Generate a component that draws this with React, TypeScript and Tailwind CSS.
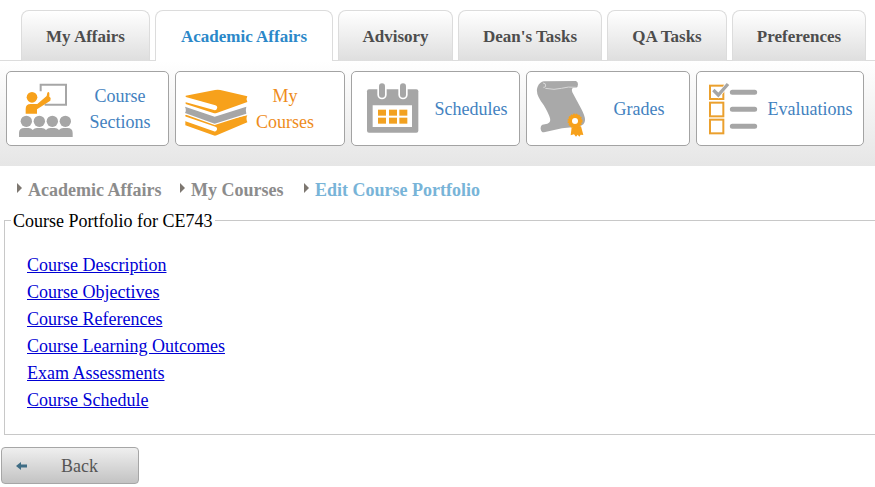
import type { ReactNode } from "react";

const tabs = [
  { label: "My Affairs", width: "w-[129px]" },
  { label: "Academic Affairs", width: "w-[178px]", active: true },
  { label: "Advisory", width: "w-[115px]" },
  { label: "Dean's Tasks", width: "w-36" },
  { label: "QA Tasks", width: "w-[120px]" },
  { label: "Preferences", width: "w-[134px]" },
];

const crumbs = ["Academic Affairs", "My Courses", "Edit Course Portfolio"];

const portfolioLinks = [
  "Course Description",
  "Course Objectives",
  "Course References",
  "Course Learning Outcomes",
  "Exam Assessments",
  "Course Schedule",
];

function SectionsIcon() {
  return (
    <svg viewBox="55 61 168 168" className="h-14 w-14 shrink-0" aria-hidden="true">
      <path d="M123 92V72h76v60h-64" fill="none" stroke="#a6a6a6" strokeWidth="6" />
      <circle cx="97" cy="110" r="16" fill="#f7a11b" />
      <path
        d="M78 159v-14q0-15 15-15h20l28-24 2-10q4-5 6 1v11l4 4-1 8-40 26v13z"
        fill="#f7a11b"
      />
      <g fill="#a6a6a6">
        {[80, 119, 158, 197].map((x) => (
          <circle key={x} cx={x} cy="182" r="17" />
        ))}
        <path d="M58 230v-13q0-15 16-15h13q8 0 12 6 5-6 13-6h14q8 0 13 6 5-6 13-6h13q8 0 13 6 5-6 13-6h12q16 0 16 15v13z" />
      </g>
    </svg>
  );
}

function BooksIcon() {
  return (
    <svg viewBox="42 61 192 168" className="h-14 w-16 shrink-0" aria-hidden="true">
      {/* bottom book */}
      <path d="M46 163l20-6 68 29 98-22q-5 9 0 21l-92 39q-5 2-10 0l-84-30z" fill="#f7a11b" />
      <path d="M30 169l104 36" stroke="#fff" strokeWidth="14" strokeLinecap="round" />
      {/* middle book */}
      <path
        d="M45 138l89 30 95-30q-3 9 0 21l-95 30-89-32q5-8 0-19z"
        fill="#a6a6a6"
        stroke="#fff"
        strokeWidth="7"
        paintOrder="stroke"
      />
      {/* top book */}
      <path
        d="M47 105l88-17q8-2 16 0l81 19q-5 8 0 17l-92 33q-5 2-10 0l-83-27z"
        fill="#f7a11b"
        stroke="#fff"
        strokeWidth="4"
        paintOrder="stroke"
      />
      <path d="M30 112l104 29" stroke="#fff" strokeWidth="15" strokeLinecap="round" />
    </svg>
  );
}

function CalendarIcon() {
  return (
    <svg viewBox="63 61 162 168" className="h-14 w-[54px] shrink-0" aria-hidden="true">
      <rect x="66" y="86" width="154" height="130" rx="6" fill="#a6a6a6" />
      <path d="M83 134h118v65H83z" fill="#fff" />
      {[111, 174].map((x) => (
        <g key={x}>
          <rect x={x - 14} y="66" width="28" height="50" rx="14" fill="#fff" />
          <rect x={x - 9} y="68" width="18" height="43" rx="9" fill="#a6a6a6" />
        </g>
      ))}
      <g fill="#f2a120">
        {[99, 132, 163].map((x) => (
          <g key={x}>
            <rect x={x} y="147" width="24" height="18" />
            <rect x={x} y="171" width="24" height="18" />
          </g>
        ))}
      </g>
    </svg>
  );
}

function DiplomaIcon() {
  return (
    <svg viewBox="48 61 150 168" className="h-14 w-[50px] shrink-0" aria-hidden="true">
      <path
        d="M66 63q4-2 8-1l94-1q6 2 6 10 0 9-6 10h-8q-7 2-3 14l27 50q16 30 9 41-4 9-22 12l-45 5-54 12q-8 1-10-10-1-10 5-13l15-3q11-3 8-16-4-15-19-40Q48 104 51 85q3-16 15-22z"
        fill="#a9a9a9"
      />
      <path
        d="M69 67q9 0 8 9-1 5-7 4M76 83q28 6 48 0t44-3"
        fill="none"
        stroke="#d8d8d8"
        strokeWidth="3"
      />
      <path d="M155 200l-3 24 10-3 6 7 5-6 5 6 4-6 8 1-7-26z" fill="#f7a11b" />
      <circle cx="165" cy="181" r="20" fill="#f7a11b" stroke="#f7a11b" strokeWidth="5" strokeDasharray="5 3" />
      <circle cx="165" cy="181" r="9" fill="#fff" />
    </svg>
  );
}

function ChecklistIcon() {
  return (
    <svg viewBox="54 61 153 168" className="h-14 w-[51px] shrink-0" aria-hidden="true">
      <g fill="none" stroke="#eba02d" strokeWidth="6">
        <rect x="60" y="75" width="40" height="40" />
        <rect x="60" y="126" width="40" height="41" />
        <rect x="60" y="177" width="40" height="41" />
      </g>
      <path d="M70 88l15 15 29-33" fill="none" stroke="#fff" strokeWidth="14" />
      <g fill="none" stroke="#a6a6a6">
        <path d="M70 88l15 15 29-33" strokeWidth="10" />
        <path d="M127 95h67M127 146h67M127 197h67" strokeWidth="15" strokeLinecap="round" />
      </g>
    </svg>
  );
}

type Shortcut = {
  lines: string[];
  icon: ReactNode;
  card: string;
  labelWidth: string;
  active?: boolean;
};

const shortcuts: Shortcut[] = [
  { lines: ["Course", "Sections"], icon: <SectionsIcon />, card: "w-[163px] pl-[11px]", labelWidth: "w-[92px]" },
  { lines: ["My", "Courses"], icon: <BooksIcon />, card: "w-[170px] pl-2", labelWidth: "w-[74px]", active: true },
  { lines: ["Schedules"], icon: <CalendarIcon />, card: "w-[169px] pl-[14px]", labelWidth: "w-[102px]" },
  { lines: ["Grades"], icon: <DiplomaIcon />, card: "w-[164px] pl-[9px]", labelWidth: "w-[106px]" },
  { lines: ["Evaluations"], icon: <ChecklistIcon />, card: "w-[168px] pl-[11px]", labelWidth: "w-[102px]" },
];

export default function App() {
  return (
    <div className="min-h-screen overflow-hidden bg-white font-['Liberation_Serif',serif] text-lg text-black">
      {/* Main tabs */}
      <nav className="flex gap-[5px] pt-[10px] pl-[21px]" aria-label="Main">
        {tabs.map((tab) => (
          <a
            key={tab.label}
            href="#"
            className={`z-10 -mb-px flex h-[51px] shrink-0 items-center justify-center rounded-t-lg border border-b-0 border-[#dcdcdc] pt-[2px] text-[17px] font-bold ${tab.width} ${
              tab.active ? "bg-white text-[#2b88c9]" : "bg-linear-to-b from-white to-[#dedede] text-[#4d4d4d]"
            }`}
          >
            {tab.label}
          </a>
        ))}
      </nav>

      {/* Shortcut cards */}
      <div className="flex gap-[6px] border-t border-[#dcdcdc] bg-linear-to-b from-white to-[#e6e6e6] px-[6px] pt-[10px] pb-5">
        {shortcuts.map((item) => (
          <a
            key={item.lines[0]}
            href="#"
            className={`flex h-[75px] shrink-0 items-center rounded-[5px] border border-[#a3a3a3] bg-white ${item.card} ${
              item.active ? "text-[#ee8c1c]" : "text-[#4382c0]"
            }`}
          >
            {item.icon}
            <span className={`shrink-0 text-center leading-[26px] ${item.labelWidth}`}>
              {item.lines.map((line) => (
                <span key={line} className="block">
                  {line}
                </span>
              ))}
            </span>
          </a>
        ))}
      </div>

      <ol className="grid grid-cols-[163px_124px_auto] pt-[10px] pl-[17px] font-bold text-[#8c8c8c]">
        {crumbs.map((crumb, i) => (
          <li key={crumb} className="flex items-center gap-[6px]">
            <svg viewBox="0 0 5 10" className="mb-1 h-[10px] w-[5px]" aria-hidden="true">
              <path d="M0 0l5 5-5 5z" fill="#7d7770" />
            </svg>
            <a href="#" className={i === crumbs.length - 1 ? "text-[#78b4d8]" : ""}>
              {crumb}
            </a>
          </li>
        ))}
      </ol>

      <fieldset className="mt-1 ml-1 border border-r-0 border-[#c8c8c8] pb-5 pl-[6px]">
        <legend className="px-[2px] pt-[2px] leading-[22px]">Course Portfolio for CE743</legend>
        <ul className="pt-5 pl-4 leading-[27px]">
          {portfolioLinks.map((link) => (
            <li key={link}>
              <a href="#" className="text-[#0000d4] underline">
                {link}
              </a>
            </li>
          ))}
        </ul>
      </fieldset>

      <button
        type="button"
        className="mt-3 ml-px flex h-[37px] w-[138px] items-center rounded-[4px] border border-[#a6a6a6] bg-linear-to-b from-[#efefef] to-[#c3c3c3] pl-[14px] text-[#555]"
      >
        <svg viewBox="0 0 11 8" className="h-2 w-[11px]" aria-hidden="true">
          <path d="M0 4l5-4v2.5h6v3H5V8z" fill="#3f6d85" />
        </svg>
        <span className="pl-[34px]">Back</span>
      </button>
    </div>
  );
}
